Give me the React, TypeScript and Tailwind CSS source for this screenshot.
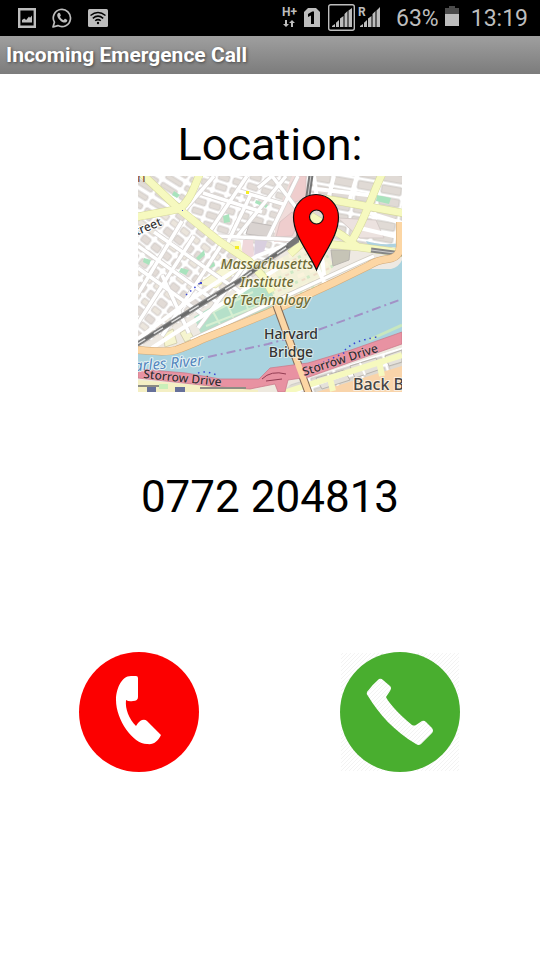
import React from "react";

const mapFont = "'Noto Sans', 'Open Sans', sans-serif";

function StatusBar() {
  return (
    <header className="flex h-9 items-center justify-between bg-black pl-[18px] pr-3 text-[#bdbdbd]">
      <div className="flex items-center gap-4">
        <svg width="18" height="20" viewBox="0 0 18 20" aria-label="Screenshot saved">
          <path d="M1.2 1.2H16.8V18.8H1.2Z" fill="none" stroke="currentColor" strokeWidth="2.4" />
          <path d="M4 14.5V12L6.2 10.5 8.2 12 11 8.5 12 9.8 14 7.5V14.5Z" fill="currentColor" />
        </svg>
        <svg width="20" height="20" viewBox="0 0 20 20" aria-label="WhatsApp">
          <path d="M1 19 2.4 14.2A8.6 8.6 0 1 1 5.9 17.6Z" fill="none" stroke="currentColor" strokeWidth="1.7" strokeLinejoin="round" />
          <path d="M6.3 5.1C7 4.5 7.7 4.7 8 5.3L8.8 7.2C8.9 7.8 8.4 8.3 7.9 8.8 8.7 10.4 9.9 11.5 11.5 12.2L12.6 11C12.9 10.7 13.3 10.8 13.7 11L15.2 11.9C15.6 12.8 14.7 14.3 13.2 14.6 10 15 5.3 10.4 5.2 7.2 5.2 6.4 5.7 5.6 6.3 5.1Z" fill="currentColor" />
        </svg>
        <svg width="20" height="20" viewBox="0 0 20 20" aria-label="Wi-Fi available">
          <rect x="0" y="1" width="20" height="18" rx="1.5" fill="currentColor" />
          <path d="M2.5 7.5Q10 1.5 17.5 7.5M4.8 10.3Q10 6 15.2 10.3M7.2 12.8Q10 10.4 12.8 12.8" fill="none" stroke="#000" strokeWidth="1.5" />
          <circle cx="10" cy="15" r="1.2" fill="#000" />
        </svg>
      </div>
      <div className="flex items-center">
        <svg width="100" height="28" viewBox="0 0 100 28" fontFamily="Roboto, sans-serif" fill="currentColor" aria-label="Mobile signal">
          <text x="0" y="12" fontSize="12" fontWeight="700">H+</text>
          <path d="M3 16H5V20H7L4 23 1 20H3ZM9 23V19H7L10 16 13 19H11V23Z" />
          <path d="M26 4H34L38 8V23H22V8Z" />
          <path d="M26 10 30.2 7.5H32V20H29V11.5L26 13Z" fill="#000" />
          <rect x="46.7" y="0.7" width="25.6" height="25.6" rx="2" fill="none" stroke="currentColor" strokeWidth="1.4" />
          <path d="M50 23V22L53 20V23ZM54 23V18.7L57 16V23ZM58 23V14.5L61.500 12V23ZM62.500 23V10L65.500 7V23ZM66.500 23V6.500L70 4V23Z" />
          <text x="76" y="12" fontSize="12" fontWeight="700">R</text>
          <path d="M78 23V22L81 20V23ZM82 23V18.7L85 16V23ZM86 23V14.5L89.500 12V23ZM90.500 23V10L93.500 7V23ZM94.500 23V6.500L98 3V23Z" />
        </svg>
        <span className="ml-[14px] mt-0.5 font-[Roboto,sans-serif] text-[23px] leading-8">63%</span>
        <svg width="14" height="20" viewBox="0 0 14 20" className="mb-1 ml-[6px]" aria-label="Battery">
          <path d="M0 2H4V0H10V2H14V8H0Z" fill="#4b4b4b" />
          <path d="M0 8H14V20H0Z" fill="currentColor" />
        </svg>
        <time className="ml-3 mt-0.5 font-[Roboto,sans-serif] text-[23px] leading-8">13:19</time>
      </div>
    </header>
  );
}

function LocationMap() {
  const westStreets = "M16 56 102 116M0 92 64 138M24 160 86 65M0 147 56 60M0 118 44 45M51 157 24 99M0 70 80 127M60 152 112 82";
  const midStreets = "M76 0 43 38M109 0 70 58M98 14 145 28M65 17 124 36M89 68 113 18M148 0 98 62M120 12 134 0 160 34M80 60 166 64M130 62 160 0";
  const orange = "M0 174C14 175 27 177 38 174 50 170 56 167 65 163L98 150 130 137 197 106 230 90Q239 84 250 83C258 82 262 78 262 70L262 46";
  const rail = "M-2 169 31 148 65 127 101 105 131 83 160 64";
  const yellow = [
    "M4 -2 41 33 81 65 111 85 126 102 134 116",
    "M62 -3C56 12 52 25 41 33L-2 41",
    "M152 78 165 66 188 68 220 71 265 77",
    "M173 40 205 60 220 71",
    "M187 23 200 25 265 37",
    "M244 -2C232 24 226 46 213 66",
  ];
  return (
    <svg className="block" width="264" height="216" viewBox="0 0 264 216" role="img" aria-label="Map of the caller's location">
      <defs>
        <pattern id="blocksWest" width="13" height="20" patternUnits="userSpaceOnUse" patternTransform="rotate(38)">
          <rect width="13" height="20" fill="#fff" />
          <rect x="2" y="2" width="9" height="7" rx="1" fill="#e2dbd6" stroke="#cfcac7" />
          <rect x="2" y="12" width="9" height="6" rx="1" fill="#ebe5dc" stroke="#cfcac7" />
        </pattern>
        <pattern id="blocksNorth" width="22" height="10" patternUnits="userSpaceOnUse" patternTransform="rotate(32)">
          <rect width="22" height="10" fill="#fff" />
          <rect x="2" y="2" width="18" height="5" rx="1" fill="#e2dcd6" stroke="#cfcac7" />
        </pattern>
        <pattern id="blocksMid" width="15" height="10" patternUnits="userSpaceOnUse" patternTransform="rotate(18)">
          <rect width="15" height="10" fill="#fff" />
          <rect x="2" y="2" width="11" height="6" rx="1" fill="#e2dcd7" stroke="#cfcac7" />
        </pattern>
        <pattern id="blocksEast" width="24" height="12" patternUnits="userSpaceOnUse" patternTransform="rotate(10)">
          <rect width="24" height="12" fill="#fff" />
          <rect x="2" y="2" width="20" height="8" rx="1" fill="#e0dad5" stroke="#cac6c2" />
        </pattern>
        <pattern id="blocksSouth" width="26" height="11" patternUnits="userSpaceOnUse" patternTransform="rotate(-17)">
          <rect width="26" height="11" fill="#fff" />
          <rect x="2" y="2" width="22" height="7" fill="#dedad2" stroke="#c5c2bf" />
        </pattern>
        <pattern id="campus" width="13" height="11" patternUnits="userSpaceOnUse" patternTransform="rotate(-24)">
          <rect width="13" height="11" fill="#f2f1d8" />
          <rect x="1" y="1" width="7" height="4" fill="#faf3dc" />
          <rect x="9" y="6" width="3" height="3" fill="#cfe8c5" />
          <rect x="3" y="7" width="4" height="2" fill="#efdcc8" />
        </pattern>
      </defs>
      <rect width="264" height="216" fill="#eee9e2" />
      <path d="M0 0H62L41 33 0 42Z" fill="url(#blocksNorth)" />
      <path d="M41 33 60 0H172L160 60 131 91Z" fill="url(#blocksMid)" />
      <path d="M0 42 41 35 125 95 0 172Z" fill="url(#blocksWest)" />
      <path d="M165 0H264V76L210 68 165 50Z" fill="url(#blocksEast)" />

      {/* Parks, campuses and large plots */}
      <path d="M138 40 154 0H166L170 25 162 66H136Z" fill="#f0dcda" />
      <path d="M152 10 158 0H168V22L152 28ZM142 46 154 36 160 48 154 60 138 61Z" fill="#efcdcd" stroke="#dcc3c3" />
      <path d="M112 46 136 50 132 61 108 58Z" fill="#d9d3d0" stroke="#bfbab8" />
      <path d="M105 64 115 63 116 82 104 78Z" fill="#f0d8db" />
      <path d="M117 64 130 63 125 78 116 81Z" fill="#d9cfdf" />
      <path d="M88 66 102 65 104 75 98 77Z" fill="#fafacb" />
      <path d="M200 42 238 44 246 62 222 62Z" fill="#ece2df" stroke="#d5cbc8" />
      <path d="M124 92 158 74 186 72 196 90 182 110 147 124 136 122Z" fill="url(#campus)" />
      <path d="M60 108 84 92 98 96 78 112Z" fill="#f7f6d6" stroke="#e5e2b8" />
      <path d="M56 141 82 126 108 112 128 104 138 126 131 133 63 158Z" fill="#b5e0c9" />
      <path d="M61 143 115 116M74 134 83 150M88 126 97 145M104 116 112 139M68 150 130 126" fill="none" stroke="#d6efd2" strokeWidth="2" />
      <path d="M42 157 50 152 56 162 47 166ZM25 158 35 153 39 167 27 171Z" fill="#f6f5cf" stroke="#d5d2b4" />
      <path d="M193 74 212 74 211 84 195 90Z" fill="#c6c4b6" stroke="#b7b4ae" />
      <path d="M228 65Q243 70 263 67V72L230 69Z" fill="#aed2df" />
      <path d="M239 19 253 22 251 28 238 25ZM36 15 42 19 39 22 34 19ZM85 40 91 38 92 46 86 47ZM58 82 66 74 67 79 60 85ZM6 82 13 84 11 89 5 86ZM43 92 51 94 48 99 41 96ZM118 24 130 29 128 32 117 27ZM74 19 82 21 81 24 73 22ZM69 89 76 86 77 90 70 93Z" fill="#a9e3bd" />

      {/* Side streets */}
      <g fill="none">
        <path d={westStreets} stroke="#d6d2d0" strokeWidth="5" />
        <path d={westStreets} stroke="#fff" strokeWidth="3.5" />
        <path d={midStreets} stroke="#d6d2d0" strokeWidth="5" />
        <path d={midStreets} stroke="#fff" strokeWidth="3.5" />
        <path d="M176 0 180 30M196 0 190 24M219 0 211 26M170 12 238 20M228 36 264 47M222 52 264 62M196 30 190 48M184 80 187 108M0 163 52 124 119 80 166 62" stroke="#fff" strokeWidth="4" />
        <path d="M53 164 133 127 220 87 236 80" stroke="#d2cec4" strokeWidth="5" />
        <path d="M53 164 133 127 220 87 236 80" stroke="#fff" strokeWidth="3.5" />
        <path d="M14 172 48 150 90 124 140 92" stroke="#fff" strokeWidth="4" />
      </g>

      {/* River */}
      <path d="M0 178 36 177 65 167 130 141 197 110 232 93H253Q261 91 264 84V161L213 176 170 190 130 203 81 205 0 197Z" fill="#aad3df" />
      <path d="M0 202 83 211 130 207 172 203 214 188 264 169V216H0Z" fill="#eee9df" />
      <path d="M0 204 120 214V216H0Z" fill="#f4efc4" />
      <path d="M153 208 264 171V207L227 216H145Z" fill="url(#blocksSouth)" />
      <path d="M172 218 264 190V218Z" fill="#f9d4aa" />
      <path d="M178 202 206 194 212 204 184 213ZM212 190 238 182 243 193 217 202ZM247 180 264 174V186L251 190Z" fill="#e4e1da" stroke="#b9b5ae" />
      <path d="M190 198 194 211M222 187 227 199M180 208 210 198M214 196 242 187" stroke="#fff" strokeWidth="2" />
      <path d="M70 181 130 168 180 154 264 123" fill="none" stroke="#a291c6" strokeWidth="2" strokeDasharray="9 4 2 4" />
      <path d="M231 164 264 149" stroke="#c8e7be" strokeWidth="3" />

      {/* Main roads */}
      {yellow.map((d) => (
        <path key={d} d={d} fill="none" strokeLinejoin="round" stroke="#d6d99c" strokeWidth="8" />
      ))}
      {yellow.map((d) => (
        <path key={d} d={d} fill="none" strokeLinejoin="round" stroke="#f6f9bf" strokeWidth="7" />
      ))}
      <path d="M145 217 264 179M195 215 192 202M244 200 241 185" fill="none" stroke="#f6f9bf" strokeWidth="6" />
      <path d="M176 84 187 108" stroke="#fff" strokeWidth="4" />

      {/* Railway */}
      <path d={rail} fill="none" stroke="#8a8a8a" strokeWidth="5" />
      <path d={rail} fill="none" stroke="#6b6b6b" strokeWidth="3" />
      <path d={rail} fill="none" stroke="#ddd" strokeWidth="1.5" strokeDasharray="11 10" />
      <path d="M150 70 160 62 170 20 173 -1" fill="none" stroke="#777" strokeWidth="5" />
      <path d="M170 20 173 -1" stroke="#ccc" strokeWidth="1" />
      <path d="M233 74 264 78" stroke="#868686" strokeWidth="5" />
      <path d="M233 74 264 78" stroke="#ccc" strokeWidth="1" />

      <path d={orange} fill="none" stroke="#cfa877" strokeWidth="8" />
      <path d={orange} fill="none" stroke="#fcd6a4" strokeWidth="7" />
      <path d="M138 128 171 218" fill="none" stroke="#836b59" strokeWidth="8" />
      <path d="M0 193 48 197 82 203 121 203 132 192 170 187 213 174 264 156V168L213 186 171 201 150 204 147 216H140L137 208 112 213 82 211 0 202Z" fill="#e892a2" stroke="#c87587" strokeWidth="0.7" />
      <path d="M138 128 171 218" stroke="#fcd6a4" strokeWidth="6" />
      <path d="M124 203Q133 194 148 198M128 205 144 203" fill="none" stroke="#923c52" />
      <path d="M0 210H24M62 212H108" stroke="#8d8d84" strokeWidth="2" />
      <path d="M9 211H18V216H9ZM37 211H47V216H37Z" fill="#667099" />
      <path d="M21 208H30V213H21Z" fill="#c9efb9" />
      <path d="M207 174Q215 165 239 161M180 189 208 176M60 197Q70 194 80 200M48 119 62 107" fill="none" stroke="#3846d5" strokeWidth="1.5" strokeDasharray="1.5 4" />
      <path d="M62 106H64V108H62ZM44 34H45V35H44Z" fill="#434bd2" />
      <path d="M97 70H101V73H97ZM108 15H111V18H108Z" fill="#f5ed25" />

      {/* Place names */}
      <g fontFamily={mapFont} paintOrder="stroke" strokeLinejoin="round">
        <g fontSize="14" fontStyle="italic" fontWeight="500" fill="#6e6b38" stroke="#fffde5" strokeOpacity="0.7" strokeWidth="2" textAnchor="middle">
          <text x="129" y="93">Massachusetts</text>
          <text x="129" y="111">Institute</text>
          <text x="129" y="129">of Technology</text>
        </g>
        <g fontSize="14" fontWeight="500" fill="#333" stroke="#ecf4ee" strokeOpacity="0.7" strokeWidth="2" textAnchor="middle">
          <text x="153" y="163">Harvard</text>
          <text x="153" y="181">Bridge</text>
        </g>
        <text x="215" y="214" fontSize="16" fontWeight="500" fill="#444" stroke="#f8eee0" strokeWidth="2">Back Bay</text>
        <text x="-21" y="195" transform="rotate(-5 0 194)" fontSize="15" fontStyle="italic" fill="#5285bd" stroke="#e7f3f5" strokeWidth="2">Charles River</text>
        <text x="5" y="202" transform="rotate(6 5 202)" fontSize="12" fontWeight="500" fill="#332c30" stroke="#ebabb7" strokeWidth="1">Storrow Drive</text>
        <text x="166" y="200" transform="rotate(-18 166 200)" fontSize="12" fontWeight="500" fill="#332c30" stroke="#ebabb7" strokeWidth="1">Storrow Drive</text>
        <text x="-8" y="59" transform="rotate(-22 0 59)" fontSize="12" fontWeight="500" fill="#333" stroke="#fff" strokeWidth="2">Street</text>
        <text x="-1" y="6" fontSize="14" fill="#794a38">n</text>
      </g>

      {/* Pin with a hole through its head */}
      <path fillRule="evenodd" d="M178.500 94C171 76 155.500 60 155.500 41A22.500 22.500 0 0 1 200.500 41C200.500 60 186 76 178.500 94ZM178.500 34A7 7 0 1 0 178.500 48A7 7 0 1 0 178.500 34Z" fill="#f00" stroke="#111" strokeWidth="1.2" />
    </svg>
  );
}

function CallButtons() {
  return (
    <div className="mt-32 flex justify-around pl-2 pr-[10px]">
      <button type="button" aria-label="Decline call" className="rounded-full">
        <svg className="block" width="120" height="120" viewBox="0 0 120 120">
          <circle cx="60" cy="60" r="60" fill="#fc0000" />
          <path d="M57 24Q59 24 59 26V45Q59 49 54 49 50 50 47 48C46 57 50 67 57 74Q60 69 63 68 66 67 68 69L82 83C79 89 75 93 68 92 54 92 37 68 37 48 37 38 42 24 52 24Z" fill="#fff" />
        </svg>
      </button>
      <button type="button" aria-label="Answer call">
        <svg className="block" width="120" height="120" viewBox="0 0 120 120">
          <defs>
            <pattern id="hatch" width="4" height="4" patternUnits="userSpaceOnUse">
              <rect width="4" height="4" fill="#fff" />
              <path d="M-1 5 5 -1" stroke="#eee" strokeWidth="0.7" />
            </pattern>
          </defs>
          <rect x="1" y="1" width="118" height="118" fill="url(#hatch)" />
          <circle cx="60" cy="60" r="60" fill="#49ae2f" />
          <path d="M27 40Q33 32 39 27 41 26 43 28L50 34Q52 36 50 39L46 45Q47 48 54 56 61 64 72 73 74 74 76 73L82 69Q84 68 86 70L92 76Q94 79 92 81L81 92Q79 94 76 92C54 79 39 62 28 44Q26 42 27 40Z" fill="url(#hatch)" />
        </svg>
      </button>
    </div>
  );
}

export default function App() {
  return (
    <div className="min-h-screen bg-white font-[Roboto,sans-serif] text-black">
      <StatusBar />
      <div className="flex h-[38px] items-center bg-linear-to-b from-[#9f9f9f] to-[#7c7c7c] px-1.5">
        <h1 className="text-[21px] font-bold leading-8 text-white [text-shadow:1px_1px_3px_#444]">Incoming Emergence Call</h1>
      </div>
      <main className="pt-11">
        <section className="flex flex-col items-center">
          <h2 className="text-[45px] leading-[54px]">Location:</h2>
          <div className="mt-1">
            <LocationMap />
          </div>
          <p className="mt-[78px] text-[44px] leading-[54px]">0772 204813</p>
        </section>
        <CallButtons />
      </main>
    </div>
  );
}
